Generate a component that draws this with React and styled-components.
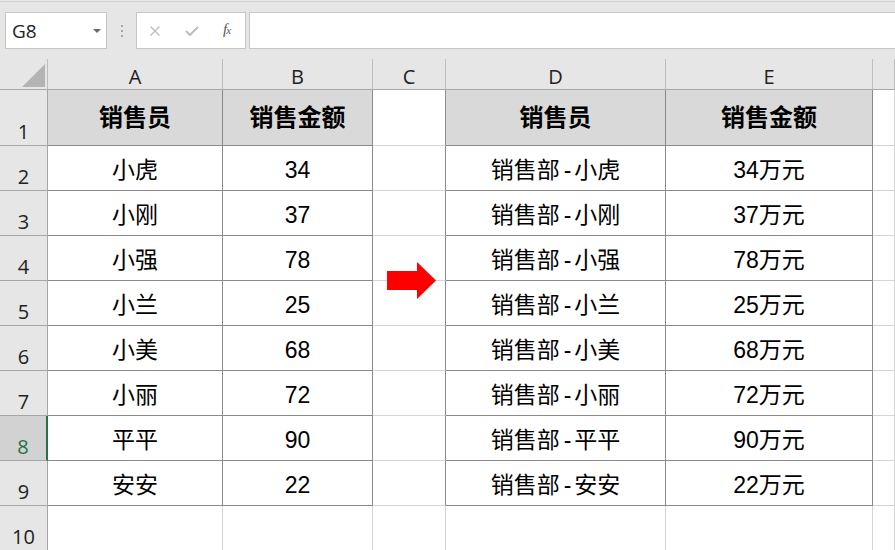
import React from 'react'
import styled, { createGlobalStyle } from 'styled-components'

const GlobalStyle = createGlobalStyle`
  html, body {
    margin: 0;
    padding: 0;
    background: #ffffff;
    overflow: hidden;
  }
  * {
    box-sizing: border-box;
  }
`

const TABLE_LINE = '#8a8a8a'
const GRID_LINE = '#d4d4d4'
const HEAD_LINE = '#a6a6a6'

const Page = styled.div`
  width: 895px;
  height: 550px;
  overflow: hidden;
  background: #e6e6e6;
`

const Toolbar = styled.div`
  display: flex;
  align-items: flex-start;
  height: 49px;
  padding-top: 12px;
  background: linear-gradient(#e8e8e8 1px, #d3d3d3 1px, #d3d3d3 2px, #e6e6e6 2px);
`

const NameBox = styled.div`
  display: flex;
  align-items: center;
  justify-content: space-between;
  width: 102px;
  height: 37px;
  margin-left: 5px;
  padding: 0 5px 0 6px;
  background: #ffffff;
  border: 1px solid #c6c6c6;
  font-family: 'Open Sans', 'Liberation Sans', sans-serif;
  font-size: 19px;
  color: #222;
`

const Caret = styled.span`
  width: 0;
  height: 0;
  border-left: 4px solid transparent;
  border-right: 4px solid transparent;
  border-top: 4px solid #6a6a6a;
`

const Grip = styled.div`
  display: flex;
  flex-direction: column;
  gap: 3px;
  margin: 13px 0 0 14px;
  & > i {
    display: block;
    width: 2px;
    height: 2px;
    background: #a8a8a8;
  }
`

const FxBox = styled.div`
  display: flex;
  align-items: center;
  gap: 24px;
  width: 110px;
  height: 37px;
  margin-left: 13px;
  padding-left: 12px;
  background: #ffffff;
  border: 1px solid #c6c6c6;
`

const FxLabel = styled.span`
  font-family: 'Liberation Serif', serif;
  font-style: italic;
  font-size: 15px;
  color: #555;
  letter-spacing: -1px;
  margin-top: -2px;
  & > small {
    font-size: 11px;
  }
`

const FormulaInput = styled.div`
  flex: 1;
  height: 37px;
  margin-left: 3px;
  background: #ffffff;
  border: 1px solid #c6c6c6;
  border-right: none;
`

const Sheet = styled.div`
  position: relative;
  display: grid;
  grid-template-columns: 48px 175px 150px 73px 220px 207px 1fr;
  grid-template-rows: 31px 56px repeat(9, 45px);
  padding-top: 10px;
  background: #e6e6e6;
`

const Corner = styled.div`
  position: relative;
  border-right: 1px solid #bdbdbd;
  border-bottom: 1px solid ${HEAD_LINE};
  & > svg {
    position: absolute;
    right: 2px;
    bottom: 2px;
  }
`

const ColHead = styled.div`
  display: flex;
  align-items: center;
  justify-content: center;
  padding-top: 5px;
  border-right: 1px solid #bdbdbd;
  border-bottom: 1px solid ${HEAD_LINE};
  font-family: 'Open Sans', 'Liberation Sans', sans-serif;
  font-size: 20px;
  line-height: 1;
  color: #222;
`

const RowHead = styled.div`
  display: flex;
  align-items: flex-end;
  justify-content: center;
  padding-bottom: 3px;
  background: ${(p) => (p.$active ? '#d2d2d2' : '#e6e6e6')};
  border-right: ${(p) => (p.$active ? '2px solid #217346' : `1px solid ${HEAD_LINE}`)};
  border-bottom: 1px solid ${HEAD_LINE};
  font-family: 'Open Sans', 'Liberation Sans', sans-serif;
  font-size: 20px;
  line-height: 1;
  color: ${(p) => (p.$active ? '#217346' : '#222')};
`

const Cell = styled.div`
  display: flex;
  align-items: center;
  justify-content: center;
  padding-top: ${(p) => (p.$head ? '0' : '5px')};
  background: ${(p) => (p.$head ? '#d9d9d9' : '#ffffff')};
  border-right: 1px solid ${(p) => (p.$darkRight ? TABLE_LINE : GRID_LINE)};
  border-bottom: 1px solid ${(p) => (p.$darkBottom ? TABLE_LINE : GRID_LINE)};
  font-family: 'Liberation Sans', 'Noto Sans CJK SC', sans-serif;
  font-size: ${(p) => (p.$head ? '24px' : '23px')};
  font-weight: ${(p) => (p.$head ? 700 : 400)};
  line-height: 1;
  color: #000;
  white-space: nowrap;
`

const Dash = styled.span`
  padding: 0 3px 0 4px;
`

const Arrow = styled.svg`
  position: absolute;
  left: 386px;
  top: 212px;
`

const names = ['小虎', '小刚', '小强', '小兰', '小美', '小丽', '平平', '安安']
const amounts = [34, 37, 78, 25, 68, 72, 90, 22]

// F is only a sliver at the right edge, its letter is off screen
const columns = ['A', 'B', 'C', 'D', 'E', '']

const rowValues = (r) => {
  if (r === 1) return ['销售员', '销售金额', '', '销售员', '销售金额', '']
  if (r > 9) return ['', '', '', '', '', '']
  const i = r - 2
  return [
    names[i],
    String(amounts[i]),
    '',
    <>
      销售部<Dash>-</Dash>
      {names[i]}
    </>,
    `${amounts[i]}万元`,
    '',
  ]
}

const App = () => {
  const rows = Array.from({ length: 10 }, (_, i) => i + 1)
  return (
    <>
      <GlobalStyle />
      <Page>
        <Toolbar>
          <NameBox>
            G8
            <Caret />
          </NameBox>
          <Grip>
            <i />
            <i />
            <i />
          </Grip>
          <FxBox>
            <svg width="12" height="10" viewBox="0 0 12 10">
              <path d="M1.5 0.5 L10.5 9.5 M10.5 0.5 L1.5 9.5" stroke="#bdbdbd" strokeWidth="1.4" fill="none" />
            </svg>
            <svg width="14" height="10" viewBox="0 0 14 10">
              <path d="M1 5 L5 9 L13 1" stroke="#bdbdbd" strokeWidth="2" fill="none" />
            </svg>
            <FxLabel>
              f<small>x</small>
            </FxLabel>
          </FxBox>
          <FormulaInput />
        </Toolbar>
        <Sheet>
          <Corner>
            <svg width="23" height="23" viewBox="0 0 23 23">
              <path d="M23 0 L23 23 L0 23 Z" fill="#b4b4b4" />
            </svg>
          </Corner>
          {columns.map((c, ci) => (
            <ColHead key={ci}>{c}</ColHead>
          ))}
          {rows.map((r) => {
            const values = rowValues(r)
            return (
              <React.Fragment key={r}>
                <RowHead $active={r === 8}>{r}</RowHead>
                {columns.map((c, ci) => {
                  const inTable = r <= 9 && ['A', 'B', 'D', 'E'].includes(c)
                  const beforeTable = r <= 9 && c === 'C'
                  return (
                    <Cell
                      key={ci}
                      $head={inTable && r === 1}
                      $darkRight={inTable || beforeTable}
                      $darkBottom={inTable}
                    >
                      {values[ci]}
                    </Cell>
                  )
                })}
              </React.Fragment>
            )
          })}
          <Arrow width="51" height="39" viewBox="0 0 51 39">
            <path d="M1 10 H31 V1 L50 19.5 L31 38 V29 H1 Z" fill="#ff0000" />
          </Arrow>
        </Sheet>
      </Page>
    </>
  )
}

export default App
